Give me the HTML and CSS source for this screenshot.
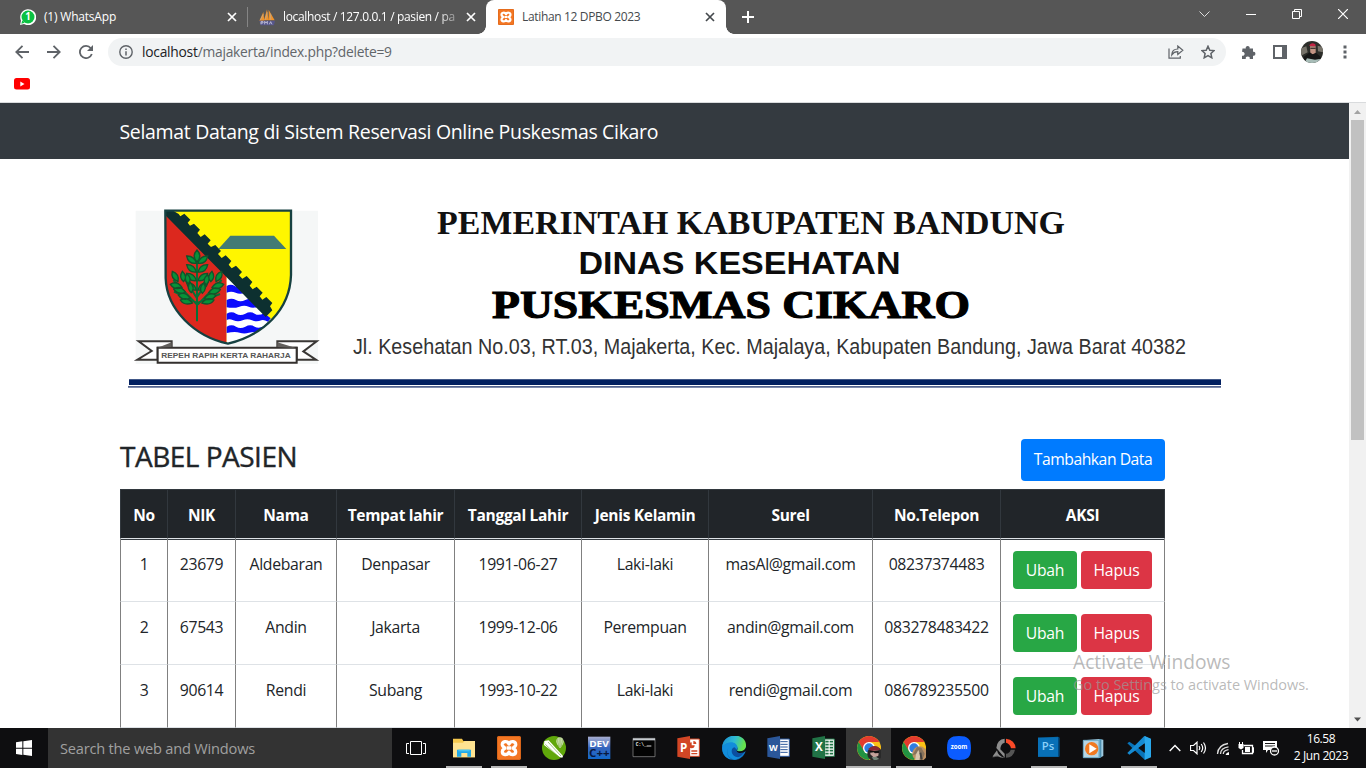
FILE: index.html
```html
<!DOCTYPE html>
<html lang="id">
<head>
<meta charset="utf-8">
<title>Latihan 12 DPBO 2023</title>
<link rel="stylesheet" href="styles.css">
</head>
<body>
<svg width="0" height="0" class="defs">
  <defs>
    <symbol id="x" viewBox="0 0 10 10"><path d="M1 1l8 8M9 1L1 9" stroke="currentColor" stroke-width="1.7" fill="none"/></symbol>
    <symbol id="xampp" viewBox="0 0 72 72">
      <rect width="72" height="72" rx="6" fill="#f37623"/><rect x="1.500" y="1.500" width="69" height="69" rx="5" fill="none" stroke="#d9651a" stroke-width="3"/>
      <path d="M36 24C31 13 15 15 16 27c1 6 6 6 7 9s-7 3-7 11c0 10 15 12 20 2 5 10 20 8 20-2 0-8-8-8-7-11s6-3 7-9c1-12-15-14-20-3zM29 36h14" fill="none" stroke="#fff" stroke-width="10" stroke-linejoin="round"/>
    </symbol>
    <symbol id="chrome" viewBox="0 0 72 72">
      <circle cx="36" cy="36" r="36" fill="#fbc116"/>
      <path d="M36 18h31A36 36 0 0 0 5 18l15 27z" fill="#e33b2e"/>
      <path d="M5 18A36 36 0 0 0 36 72l15-27-15 8-15-8z" fill="#229342"/>
      <circle cx="36" cy="36" r="18" fill="#fff"/><circle cx="36" cy="36" r="14" fill="#2f7de1"/>
    </symbol>
  </defs>
</svg>

<header class="tabs">
  <div class="tab tab-wa">
    <svg width="16" height="16" viewBox="0 0 48 48"><path d="M0 48l3-13A24 24 0 1 1 12 45z" fill="#fff"/><circle cx="24" cy="24" r="19.500" fill="#0bc142"/><path d="M4 44l3-10 7 7z" fill="#0bc142"/><text x="24" y="34" text-anchor="middle" class="wa-n">1</text></svg>
    <span class="tab-name wa-name">(1) WhatsApp</span>
    <svg class="close" width="10" height="10"><use href="#x"/></svg>
  </div>
  <div class="tab tab-pma">
    <svg width="17" height="17" viewBox="0 0 51 51"><path d="M1 35L13 9l3 26zM15 34L24 1l5 33zM29 34V2l18 32z" fill="#f0922a"/><path d="M4 33l9-17M19 32l6-22M35 32V14" stroke="#b5b0a5" stroke-width="2"/><path d="M1 35h47l-3 14H5z" fill="#56568a"/><path d="M6 46V38h6v4H6M17 46v-9l4 5 4-5v9M31 46l4-8 4 8" fill="none" stroke="#c9c9df" stroke-width="2.500"/></svg>
    <span class="tab-name pma-name">localhost / 127.0.0.1 / pasien / pa</span>
    <svg class="close" width="10" height="10"><use href="#x"/></svg>
  </div>
  <div class="tab tab-active">
    <svg width="16" height="16"><use href="#xampp"/></svg>
    <span class="tab-name">Latihan 12 DPBO 2023</span>
    <svg class="close" width="10" height="10"><use href="#x"/></svg>
  </div>
  <svg class="plus" width="12" height="12" viewBox="0 0 12 12"><path d="M6 0v12M0 6h12" stroke="#fff" stroke-width="2"/></svg>
  <div class="winctl">
    <svg width="11" height="10" viewBox="0 0 11 10"><path d="M.5 2.500l5 5 5-5" fill="none" stroke="#ddd"/></svg>
    <svg width="10" height="10" viewBox="0 0 10 10"><path d="M0 5.500h10" stroke="#fff"/></svg>
    <svg width="10" height="10" viewBox="0 0 10 10"><path d="M.5 2.500h7v7h-7zM2.500 2.500v-2h7v7h-2" fill="none" stroke="#fff"/></svg>
    <svg width="10" height="10" viewBox="0 0 10 10"><path d="M0 0l10 10M10 0L0 10" stroke="#fff" stroke-width="1.200"/></svg>
  </div>
</header>

<div class="toolbar">
  <svg class="nav" width="14" height="14" viewBox="0 0 14 14"><path d="M14 7H1.500M7.500.8L1.300 7l6.200 6.200" class="ico"/></svg>
  <svg class="nav" width="14" height="14" viewBox="0 0 14 14"><path d="M0 7h12.500M6.500.8L12.700 7l-6.200 6.200" class="ico"/></svg>
  <svg class="nav" width="14" height="14" viewBox="0 0 14 14"><path d="M11.800 3.200A6.100 6.100 0 1 0 12.800 9" class="ico"/><path d="M14 0v6H8z" fill="#5f6368"/></svg>
  <div class="url">
    <svg width="14" height="14" viewBox="0 0 14 14"><circle cx="7" cy="7" r="6.200" fill="none" stroke="#5f6368" stroke-width="1.400"/><path d="M7 6.200v4.300M7 3.400v1.500" stroke="#5f6368" stroke-width="1.500"/></svg>
    <span class="addr"><b>localhost</b>/majakerta/index.php?delete=9</span>
    <svg class="share" width="16" height="14" viewBox="0 0 16 14"><path d="M1 3.500v9.700h11.300V11" fill="none" stroke="#5f6368" stroke-width="1.200"/><path d="M3.800 9.800C4 6 6.500 4 9.800 4V1l5 4.200-5 4.200V6.700C7 6.700 5.200 7.700 3.800 9.800z" fill="none" stroke="#5f6368" stroke-width="1.200"/></svg>
    <svg width="14" height="14" viewBox="0 0 14 14"><path d="M7 1.200l1.800 4 4.300.4-3.200 2.900.9 4.300L7 10.600l-3.800 2.200.9-4.300L.9 5.600l4.300-.4z" fill="none" stroke="#5f6368" stroke-width="1.500"/></svg>
  </div>
  <svg class="ext" width="15" height="15" viewBox="0 0 15 15"><path d="M1.500 3.500h3.300a2 2 0 1 1 3.800 0H12v3.300a2 2 0 1 1 0 3.900V14H8.700a2 2 0 1 0-3.900 0H1v-3.300a2 2 0 1 0 0-3.800z" fill="#5f6368"/></svg>
  <svg class="side" width="14" height="14" viewBox="0 0 14 14"><path d="M1 1h12v12H1z" fill="#fff" stroke="#5f6368" stroke-width="2"/><path d="M9 1h4v12H9z" fill="#5f6368"/></svg>
  <svg class="avatar" width="22" height="22" viewBox="0 0 66 66"><clipPath id="av"><circle cx="33" cy="33" r="33"/></clipPath><g clip-path="url(#av)"><path fill="#2d2e2a" d="M0 0h66v66H0z"/><path fill="#77736a" d="M0 22l16-6 4 18-20 10zM50 14l16 4v16l-15-3z"/><path fill="#c39484" d="M27 16h17v20q-8 9-16 0z"/><path fill="#c42545" d="M25 15C27 5 40 4 45 13l-4 3-12-1z"/><path fill="#171717" d="M28 20h16v3H28zM8 48l18-14 9 6 10-5 17 15v9H8z"/><path fill="#a7bcb7" d="M10 66l8-14 24 4 19-3v13z"/></g></svg>
  <svg width="4" height="14" viewBox="0 0 4 14"><path d="M.5.500h3v3h-3zM.5 5.500h3v3h-3zM.5 10.500h3v3h-3z" fill="#5f6368"/></svg>
</div>
<div class="bookmarks"><svg width="16" height="12" viewBox="0 0 16 12"><rect width="16" height="11.500" rx="2.500" fill="#f00"/><path d="M6.300 3.500v5L10.500 6z" fill="#fff"/></svg></div>

<div class="view">
  <main class="page">
    <nav class="navbar">Selamat Datang di Sistem Reservasi Online Puskesmas Cikaro</nav>
    <svg class="letterhead" width="1110" height="195" viewBox="0 0 1110 195">
      <g transform="scale(.33333)">
        <path d="M47 32h547v460H47z" fill="#f5f7f7"/>
        <clipPath id="sh"><path d="M136 32H513V225C510 330 430 405 324 431 225 410 140 330 137 235z"/></clipPath>
        <g clip-path="url(#sh)">
          <path d="M130 30h390v410H130z" fill="#fff600"/>
          <path d="M130 25L320 228V440H130z" fill="#dc281e"/>
          <path d="M320 225L460 365 400 440H320z" fill="#fff"/>
          <path d="M320 258q12-8 24 0t28-2l26 22q-14-4-24 0-13 6-27 0t-27 0zM320 300q15-8 28 0t28 0 28-2l34 20q-14-2-24 2-15 6-28 0t-28 0-38 2zM320 341q15-8 28 0t28 0 28 0 28-2l20 16-8 10q-14-8-20-4-14 6-28 0t-28 0-28 0-20 0zM320 380q15-8 28 0t28 0 28 0 35-4l-22 22q-16-4-30 0-14 5-28 0t-39 1z" fill="#0b0bfd"/>
          <path d="M134 24l20 5 22 13 5 7 12-8 18 18-8 9 7 9 12-6 18 18-8 10 10 12 12-8 18 18-9 10 10 10 13-6 17 18-9 9 11 12 12-8 17 17-8 11 9 11 13-8 18 19-9 10 10 10 13-8 17 18-8 11 9 11 12-8 18 18-9 11 8 10 12-8 18 18-7 10 7 12-20 20L320 232 136 46z" fill="#0d3030"/>
        </g>
        <path d="M136 32H513V225C510 330 430 405 324 431 225 410 140 330 137 235z" fill="none" stroke="#164141" stroke-width="7"/>
        <path d="M331 107H462L499 147H295z" fill="#427b74"/>
        <path d="M231 364V180M231 314L160 240M233 314L305 240M231 295L190 230M232 290L275 225M229 308L162 275M234 308L300 282" stroke="#087036" stroke-width="6" fill="none"/>
        <g fill="#079238" stroke="#12532c" stroke-width="4">
          <path d="M231 186q-17-18 0-36 17 18 0 36z"/>
          <path d="M229 190q-24 3-29-22 23-1 29 22zM229 216q-24 3-29-22 23-1 29 22zM229 242q-24 3-29-22 23-1 29 22zM229 270q-24 3-29-22 23-1 29 22zM234 190q24 3 29-22-23-1-29 22zM234 216q24 3 29-22-23-1-29 22zM234 242q24 3 29-22-23-1-29 22zM234 270q24 3 29-22-23-1-29 22z"/>
          <path d="M174 245q-23-9-17-31 22 8 17 31zM191 245q-16-14-4-31 17 16 4 31zM205 252q-16-14-4-31 17 16 4 31zM186 262q-21 11-35-9 19-13 35 9zM196 276q-21 11-35-9 19-13 35 9zM210 294q-21 11-35-9 19-13 35 9zM217 309q-25 9-36-9 22-11 36 9zM214 278q-16-14-4-31 17 16 4 31zM288 245q23-9 17-31-22 8-17 31zM272 245q16-14 4-31-17 16-4 31zM258 255q16-14 4-31-17 16-4 31zM276 262q21 11 35-9-19-13-35 9zM266 278q21 11 35-9-19-13-35 9zM253 295q21 11 35-9-19-13-35 9zM246 309q25 9 36-9-22-11-36 9zM247 280q16-14 4-31-17 16-4 31z"/>
        </g>
        <path d="M56 424h99v19h-42v36H52l43-26zM590 424H472v19h58v36h58l-38-25z" fill="#fff" stroke="#3a3735" stroke-width="6"/>
        <path d="M113 443H530V488H113z" fill="#fff" stroke="#34302e" stroke-width="6"/>
        <path d="M113 443l42-16v14zM472 427v14l56 3z" fill="#625f5c"/>
        <text x="124" y="473" textLength="388" lengthAdjust="spacingAndGlyphs" class="motto">REPEH RAPIH KERTA RAHARJA</text>
      </g>
      <text x="317" y="33.700" textLength="628" lengthAdjust="spacingAndGlyphs" class="lh1">PEMERINTAH KABUPATEN BANDUNG</text>
      <text x="458.500" y="73.600" textLength="322" lengthAdjust="spacingAndGlyphs" class="lh2">DINAS KESEHATAN</text>
      <text x="372" y="117.500" textLength="478" lengthAdjust="spacingAndGlyphs" class="lh3">PUSKESMAS CIKARO</text>
      <text x="233" y="154" textLength="833" lengthAdjust="spacingAndGlyphs" class="lh4">Jl. Kesehatan No.03, RT.03, Majakerta, Kec. Majalaya, Kabupaten Bandung, Jawa Barat 40382</text>
      <path d="M9 179.300h1092v5.700H9z" fill="#022060"/><path d="M8 186.800h1093" stroke="#54648f" stroke-width="1.700"/>
    </svg>
    <section class="content">
      <div class="title-row"><h1>TABEL PASIEN</h1><a class="btn btn-blue">Tambahkan Data</a></div>
      <table>
        <colgroup><col class="c1"><col class="c2"><col class="c3"><col class="c4"><col class="c5"><col class="c5"><col class="c7"><col class="c8"><col class="c9"></colgroup>
        <thead><tr><th>No</th><th>NIK</th><th>Nama</th><th>Tempat lahir</th><th>Tanggal Lahir</th><th>Jenis Kelamin</th><th>Surel</th><th>No.Telepon</th><th>AKSI</th></tr></thead>
        <tbody>
          <tr><td>1</td><td>23679</td><td>Aldebaran</td><td>Denpasar</td><td>1991-06-27</td><td>Laki-laki</td><td>masAl@gmail.com</td><td>08237374483</td><td><div class="acts"><a class="btn btn-green">Ubah</a><a class="btn btn-red">Hapus</a></div></td></tr>
          <tr><td>2</td><td>67543</td><td>Andin</td><td>Jakarta</td><td>1999-12-06</td><td>Perempuan</td><td>andin@gmail.com</td><td>083278483422</td><td><div class="acts"><a class="btn btn-green">Ubah</a><a class="btn btn-red">Hapus</a></div></td></tr>
          <tr><td>3</td><td>90614</td><td>Rendi</td><td>Subang</td><td>1993-10-22</td><td>Laki-laki</td><td>rendi@gmail.com</td><td>086789235500</td><td><div class="acts"><a class="btn btn-green">Ubah</a><a class="btn btn-red">Hapus</a></div></td></tr>
        </tbody>
      </table>
    </section>
  </main>
  <aside class="scroll">
    <svg width="17" height="17" viewBox="0 0 17 17"><path d="M5 11l3.500-4L12 11z" fill="#a3a3a3"/></svg>
    <div class="thumb"></div>
    <svg width="17" height="17" viewBox="0 0 17 17"><path d="M5 6.500l3.500 4 3.500-4z" fill="#505050"/></svg>
  </aside>
</div>

<footer class="taskbar">
  <div class="start"><svg width="16" height="16" viewBox="0 0 48 48"><path d="M0 7l19-3v19H0zM22 3.500L48 0v23H22zM0 26h19v19L0 42zM22 26h26v22l-26-4z" fill="#fff"/></svg></div>
  <div class="search">Search the web and Windows</div>
  <div class="apps">
    <div class="app task-view"><svg class="i" viewBox="0 0 72 72"><path d="M19.500 16.500h33v39h-33zM15 22.500H7.500v30H15M57 22.500h7.500v30H57" fill="none" stroke="#fff" stroke-width="3"/></svg></div>
    <div class="app on"><svg class="i" viewBox="0 0 72 72"><path d="M3 8h27l4 7h35v49H3z" fill="#f5c84e"/><path d="M3 20h30l5-5h31v49H3z" fill="#ffe391"/><path d="M15 62V41h42v21H46V51H28v11z" fill="#21a9e8"/><path d="M19 41h34v5H19z" fill="#46c4f2"/></svg></div>
    <div class="app on"><svg class="i" viewBox="0 0 72 72"><use href="#xampp"/></svg></div>
    <div class="app"><svg class="i" viewBox="0 0 72 72"><circle cx="36" cy="36" r="36" fill="#60a70b"/><path d="M7 15l13-2 43 47-2 5-8-2L6 27z" fill="#fff"/><path d="M10 25l38 36M18 18l39 42" stroke="#72a83e" stroke-width="2"/><path d="M43 18c-2-19 23-19 22 0-2 10-7 13-9 17h-4c-2-5-7-8-9-17z" fill="#d6e7b9"/><path d="M54 4v30M48 7c-2 9 0 15 3 25M60 7c2 9 0 15-3 25" stroke="#72a83e" stroke-width="2" fill="none"/></svg></div>
    <div class="app"><svg class="i" viewBox="0 0 72 72"><defs><linearGradient id="dv" x2="0" y2="1"><stop stop-color="#aab0d2"/><stop offset=".5" stop-color="#3665bd"/><stop offset="1" stop-color="#1269cb"/></linearGradient></defs><path d="M3 2h67v67H3z" fill="url(#dv)"/><text x="36" y="33" text-anchor="middle" textLength="59" lengthAdjust="spacingAndGlyphs" class="dev">DEV</text><text x="37" y="64" text-anchor="middle" textLength="62" lengthAdjust="spacingAndGlyphs" class="cpp">C++</text></svg></div>
    <div class="app"><svg class="i" viewBox="0 0 72 72"><path d="M3 7h66v55H3z" fill="#030303" stroke="#999" stroke-width="2"/><path d="M3 7h66v6H3z" fill="#c6cbd0"/><text x="11" y="31" class="cmd">C:\_</text><path d="M44 30h14" stroke="#ddd" stroke-width="3"/></svg></div>
    <div class="app"><svg class="i" viewBox="0 0 72 72"><path d="M38 9h29v52H38z" fill="#fff" stroke="#d24625" stroke-width="3"/><path d="M44 19a9 9 0 1 0 9 9h-9zM49 15v9h9a9 9 0 0 0-9-9zM43 43h18v4H43zM43 51h18v4H43z" fill="#d24625"/><path d="M1 7l38-7v69L1 62z" fill="#d24625"/><text x="9" y="47" class="office">P</text></svg></div>
    <div class="app"><svg class="i" viewBox="0 0 72 72"><defs><linearGradient id="ed" x2="1" y2=".25"><stop stop-color="#188bd1"/><stop offset=".55" stop-color="#2ebbd4"/><stop offset="1" stop-color="#66e24b"/></linearGradient></defs><circle cx="36" cy="36" r="36" fill="#0d6fbc"/><path d="M1 32C4-12 74-12 72 30c-1 16-16 20-27 14 10-17-20-35-44-12z" fill="url(#ed)"/><path d="M1 33c17-22 45-16 45 2-2 4-4 7-2 11 5 9 20 4 25-1-6 15-16 23-30 26-20-3-27-20-20-35-6 10-5 25 8 34C9 67-1 50 1 33z" fill="#128ddb"/><path d="M37 34c-14 4-9 29 11 30 8-1 17-11 21-19-9 5-22 6-26-1-2-4 1-6-6-10z" fill="#0b4fa0"/><path d="M46 35c-1 5-4 8-1 12 5 6 18 5 27-2V34c-4 12-18 14-27 10z" fill="#0d0d0f"/></svg></div>
    <div class="app"><svg class="i" viewBox="0 0 72 72"><path d="M38 9h29v52H38z" fill="#fff" stroke="#2b579a" stroke-width="3"/><path d="M40 17h22M40 25h22M40 33h22M40 41h22M40 49h22" stroke="#2b579a" stroke-width="3"/><path d="M1 7l38-7v69L1 62z" fill="#2b579a"/><text x="6" y="45" class="office w">W</text></svg></div>
    <div class="app"><svg class="i" viewBox="0 0 72 72"><path d="M38 9h29v52H38z" fill="#fff" stroke="#217346" stroke-width="3"/><path d="M40 17h24M40 26h24M40 35h24M40 44h24M40 53h24" stroke="#217346" stroke-width="5" stroke-dasharray="10 3"/><path d="M1 7l38-7v69L1 62z" fill="#217346"/><text x="9" y="46" class="office">X</text></svg></div>
    <div class="app cur"><svg class="i" viewBox="0 0 72 72"><use href="#chrome"/><circle cx="53" cy="53" r="22" fill="#292929"/><path d="M40 41q14-17 26 0l-2 18-13 6-11-10z" fill="#c4a29a"/><path d="M34 38q20-17 36 2l-5 3-26 2z" fill="#8c2731"/><path d="M37 43l14 2 15-2v8l-12 1-4-3-10 1z" fill="#101010"/><path d="M44 64l13-2 10 7-15 5z" fill="#738679"/></svg></div>
    <div class="app on"><svg class="i" viewBox="0 0 72 72"><use href="#chrome"/><circle cx="53" cy="53" r="22" fill="#bd9163"/><path d="M45 33l13 2 10 18-6 17-18 2 3-18-15 3z" fill="#87735c"/><path d="M42 55l7-13 6 14-3 18H39z" fill="#d9c6ad"/><path d="M55 50l4 21" stroke="#43413f" stroke-width="6"/></svg></div>
    <div class="app"><svg class="i" viewBox="0 0 72 72"><path d="M36 0C9 0 0 9 0 36s9 36 36 36 36-9 36-36S63 0 36 0z" fill="#0b5cff"/><text x="36" y="40" text-anchor="middle" textLength="50" lengthAdjust="spacingAndGlyphs" class="zoom">zoom</text></svg></div>
    <div class="app"><svg class="i" viewBox="0 0 72 72"><path d="M42 8q27 3 29 29H57q-3-14-15-17z" fill="#fa4927"/><path d="M69 41Q65 64 42 65V53q11-1 14-12z" fill="#555"/><path d="M38 65Q18 62 15 43L2 61l14-2q9 8 22 6V53L25 40Q25 23 38 20V8Q15 10 13 36z" fill="#8c8c8c"/><path d="M38 65L4 60 1 64l19-2z" fill="#727272"/></svg></div>
    <div class="app on"><svg class="i" viewBox="0 0 72 72"><path d="M3 5l60-3 4 4v56H3z" fill="#0769a8"/><path d="M3 5h60v57H3z" fill="#0870b7"/><path d="M63 5l4-3v57l-4 3z" fill="#00487d"/><text x="33" y="42" text-anchor="middle" class="ps">Ps</text></svg></div>
    <div class="app"><svg class="i" viewBox="0 0 72 72"><path d="M4 13l48-4 12 2v49l-12 6-48-2z" fill="#9fcbe1"/><path d="M52 9h6v55l-6 2z" fill="#4f91b1"/><path d="M4 13h47v52H4z" fill="#b8d6e4" stroke="#6cabc8" stroke-width="3"/><circle cx="29" cy="38" r="20" fill="#f17a22"/><path d="M22 25v27l22-14z" fill="#fff"/></svg></div>
    <div class="app on"><svg class="i" viewBox="0 0 72 72"><path d="M1 22l6-5L72 60 53 71z" fill="#0873b8"/><path d="M1 51l6 5L72 10 52 0z" fill="#168bd2"/><path d="M53 0l19 8v56l-19 8V17z" fill="#29a8ec"/><path d="M53 22L34 36l19 15z" fill="#0d0d0f"/></svg></div>
  </div>
  <div class="tray">
    <svg width="12" height="8" viewBox="0 0 12 8"><path d="M.7 7L6 1.500 11.300 7" fill="none" stroke="#fff" stroke-width="1.400"/></svg>
    <svg width="17" height="14" viewBox="0 0 17 14"><path d="M.5 4.500h3L7 1.200v11.600L3.500 9.500h-3zM9 5q1.500 2 0 4M11.200 3q3 4 0 8M13.500 1.500q4 5.500 0 11" fill="none" stroke="#fff" stroke-width="1.200"/></svg>
    <svg width="13" height="13" viewBox="0 0 13 13"><path d="M1.500 12Q2 3 12 1.500M4.500 12q0-6 8-7.200M7.300 12q0-3.500 5.200-4.300" fill="none" stroke="#ddd" stroke-width="1.300"/><path d="M9.500 13a4 4 0 0 1 3.500-3v3z" fill="#fff"/></svg>
    <svg width="16" height="13" viewBox="0 0 16 13"><path d="M5.500 3.500h9v8h-10V8M14.500 6h1v4h-1" fill="none" stroke="#fff" stroke-width="1.300"/><path d="M7 5h5v5H7zM.5 2h5v4L3 7.500.500 6zM1 0h1v3H1zM4 0h1v3H4z" fill="#fff"/></svg>
    <svg width="17" height="16" viewBox="0 0 17 16"><path d="M0 1h14v9H5l-2 3v-3H0z" fill="#fff"/><path d="M2 3.500h10M2 6h10" stroke="#161616"/><circle cx="11.500" cy="11" r="4" fill="#161616" stroke="#fff" stroke-width="1.300"/><path d="M9 11h5" stroke="#fff" stroke-width="1.300"/></svg>
  </div>
  <div class="clock"><span>16.58</span><span>2 Jun 2023</span></div>
  <div class="desk"></div>
</footer>

<div class="watermark"><div class="w1">Activate Windows</div><div class="w2">Go to Settings to activate Windows.</div></div>
</body>
</html>
```
FILE: styles.css
```css
* { box-sizing: border-box; }
body { margin: 0; width: 1366px; height: 768px; overflow: hidden; background: #fff; font-family: "Open Sans", "Noto Sans", sans-serif; display: flex; flex-direction: column; color: #212529; }
svg { display: block; flex: none; }
.defs { position: absolute; }

.tabs { height: 34px; flex: none; background: #565656; display: flex; align-items: center; color: #fff; }
.tab { display: flex; align-items: center; height: 34px; font-size: 12px; letter-spacing: -.34px; white-space: nowrap; }
.tab-name { padding-bottom: 1px; }
.tab-wa { width: 247px; padding-left: 20px; gap: 8px; }
.wa-name { letter-spacing: -.2px; }
.tab-wa .close { margin-left: auto; margin-right: 10px; }
.tab-pma { width: 239px; padding-left: 11px; gap: 7px; }
.tab-pma::before { content: ""; width: 1px; height: 20px; background: #858585; margin-left: -11px; margin-right: 4px; }
.pma-name { width: 176px; overflow: hidden; -webkit-mask-image: linear-gradient(90deg, #000 155px, transparent 182px); mask-image: linear-gradient(90deg, #000 155px, transparent 182px); }
.tab-pma .close { margin-left: 0; }
.tab-active { width: 240px; padding: 0 11px 0 12px; gap: 8px; background: #fff; color: #45494d; border-radius: 8px 8px 0 0; position: relative; }
.tab-active::before, .tab-active::after { content: ""; position: absolute; bottom: 0; width: 8px; height: 8px; }
.tab-active::before { left: -8px; background: radial-gradient(circle at 0 0, transparent 7.5px, #fff 8px); }
.tab-active::after { right: -8px; background: radial-gradient(circle at 100% 0, transparent 7.5px, #fff 8px); }
.tab-active .close { margin-left: auto; }
.wa-n { font: bold 29px "Open Sans", sans-serif; fill: #fff; }
.plus { margin-left: 16px; }
.winctl { margin-left: auto; display: flex; gap: 36px; padding-right: 18px; padding-bottom: 6px; align-items: center; }

.toolbar { height: 36px; flex: none; display: flex; align-items: center; padding-left: 15px; }
.nav { margin-right: 18px; }
.ico { fill: none; stroke: #5f6368; stroke-width: 1.8; }
.url { width: 1118px; height: 28px; margin-left: -3px; border-radius: 14px; background: #f1f3f4; display: flex; align-items: center; padding: 0 11px; }
.addr { margin-left: 9px; padding-bottom: 1px; font-size: 13.8px; letter-spacing: -.24px; color: #62666a; }
.addr b { font-weight: 400; color: #202124; }
.share { margin-left: auto; margin-right: 17px; }
.ext { margin-left: 15px; }
.side { margin-left: 17px; }
.avatar { margin-left: 14px; margin-right: 20px; }
.bookmarks { height: 33px; flex: none; border-bottom: 1px solid #d9dbdd; padding: 8px 14px; }

.view { height: 625px; flex: none; display: flex; overflow: hidden; }
.page { width: 1349px; height: 625px; overflow: hidden; }
.navbar { height: 56px; background: #343a40; color: #fff; padding-left: 119.5px; font-size: 19.5px; letter-spacing: -.32px; line-height: 57px; }
.letterhead { margin: 41px 0 0 120px; }
.motto { font: bold 23px "Liberation Sans", sans-serif; fill: #555; }
.lh1 { font: bold 33px "Liberation Serif", serif; fill: #111; }
.lh2 { font: bold 32px "Liberation Sans", sans-serif; fill: #0c0c0c; }
.lh3 { font: bold 39.5px "Liberation Serif", serif; fill: #000; stroke: #000; stroke-width: 1.1px; }
.lh4 { font: 21.5px "Liberation Sans", sans-serif; fill: #333; }
.content { width: 1045px; margin-left: 120px; padding-top: 44px; }
.title-row { height: 50px; display: flex; justify-content: space-between; }
h1 { margin: 0; font-size: 28px; line-height: 34px; font-weight: 500; letter-spacing: -.5px; -webkit-text-stroke: .4px #212529; }
.btn { height: 38px; border-radius: 4px; color: #fff; font-size: 15.7px; letter-spacing: -.45px; line-height: 39px; text-align: center; display: block; }
.btn-blue { width: 144px; height: 42px; background: #007bff; line-height: 40px; }
.btn-green { width: 64px; background: #28a745; letter-spacing: -.2px; }
.btn-red { width: 71px; background: #dc3545; letter-spacing: -.2px; }

table { width: 1045px; table-layout: fixed; border-spacing: 0; }
.c1 { width: 47px; } .c2 { width: 68px; } .c3 { width: 101px; } .c4 { width: 118px; } .c5 { width: 127px; }
.c7 { width: 164px; } .c8 { width: 128px; } .c9 { width: 165px; }
th { height: 50px; padding: 1px 0 0; background: #212529; color: #fff; font-size: 15.5px; letter-spacing: -.3px; font-weight: 700; white-space: nowrap; border-top: 1px solid #32383e; border-left: 1px solid #32383e; border-bottom: 1px solid #dee2e6; }
th:last-child { border-right: 1px solid #32383e; }
td { height: 63px; padding: 12.6px 0 0; vertical-align: top; text-align: center; font-size: 15.8px; letter-spacing: -.33px; line-height: 24px; white-space: nowrap; border-left: 1px solid #808080; border-bottom: 1px solid #dee2e6; }
td:last-child { padding: 12px 0 0 12px; border-right: 1px solid #808080; }
tbody tr:first-child td { box-shadow: inset 0 1px #343a40; }
.acts { display: flex; gap: 4px; }

.scroll { width: 17px; background: #f1f1f1; display: flex; flex-direction: column; }
.thumb { width: 13px; height: 320px; background: #c1c1c1; margin: 0 2px auto; }

.taskbar { height: 40px; flex: none; background: #0e0e10; display: flex; color: #fff; }
.start { width: 48px; flex: none; display: flex; align-items: center; justify-content: center; }
.search { width: 344px; flex: none; background: #333; color: #a0a0a0; padding-left: 12px; font-size: 14.6px; letter-spacing: -.2px; line-height: 41px; }
.apps { display: flex; flex: none; padding-left: 1.5px; }
.app { width: 45px; height: 40px; display: flex; align-items: center; justify-content: center; }
.task-view { margin-right: 2.5px; }
.on { background: linear-gradient(#b8b8b8, #b8b8b8) 5px 38px / 36px 2px no-repeat; }
.cur { background: linear-gradient(#b8b8b8, #b8b8b8) 0 38px / 45px 2px no-repeat, #373737; }
.i { width: 24px; height: 24px; }
.dev { font: bold 27px "Open Sans", sans-serif; fill: #fff; }
.cpp { font: bold 29px "Open Sans", sans-serif; fill: #08183e; }
.cmd { font: bold 14px "Liberation Mono", monospace; fill: #eee; }
.office { font: bold 35px "Open Sans", sans-serif; fill: #fff; }
.office.w { font-size: 27px; }
.zoom { font: bold 20px "Open Sans", sans-serif; fill: #fff; }
.ps { font: 600 34px "Open Sans", sans-serif; fill: #8bd1fa; }
.tray { display: flex; align-items: center; gap: 9px; margin-left: 8px; width: 111px; flex: none; }
.clock { width: 82px; flex: none; display: flex; flex-direction: column; align-items: center; padding-top: 2px; font-size: 12px; line-height: 17px; letter-spacing: -.4px; }
.desk { width: 1px; background: #777; margin-left: auto; margin-right: 4px; }

.watermark { position: absolute; left: 1073px; top: 649px; color: rgba(155, 155, 155, .7); white-space: nowrap; }
.w1 { font-size: 19.2px; line-height: 26px; }
.w2 { font-size: 14.5px; line-height: 20px; letter-spacing: -.05px; }
```
